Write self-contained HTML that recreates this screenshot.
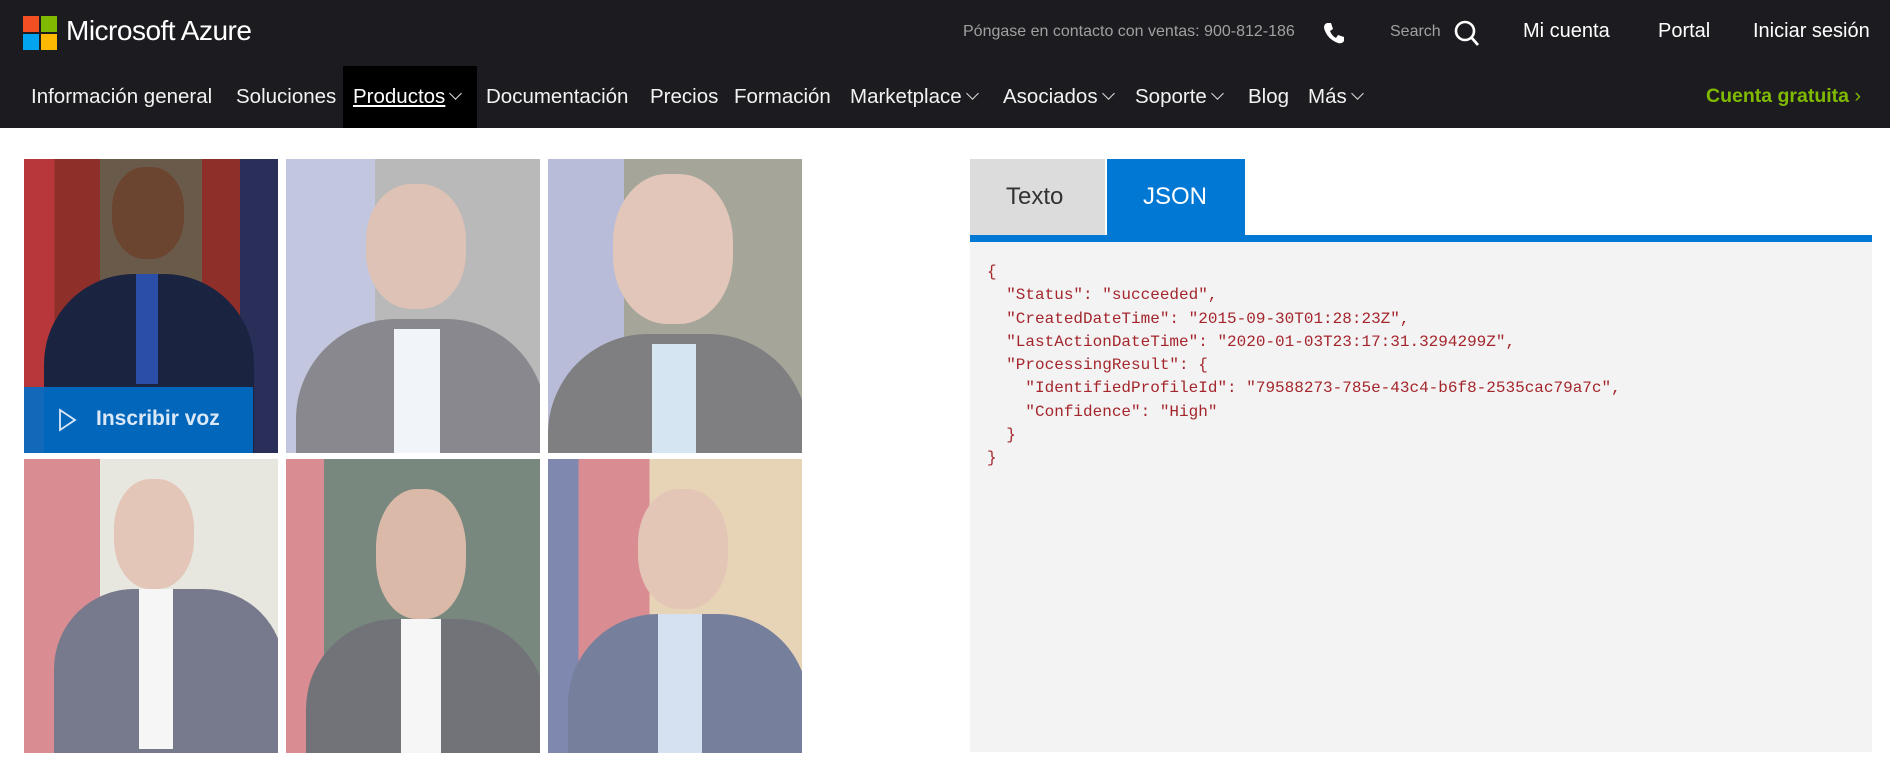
<!DOCTYPE html>
<html><head><meta charset="utf-8"><style>
*{margin:0;padding:0;box-sizing:border-box}
body{width:1890px;height:777px;background:#fff;font-family:"Liberation Sans",sans-serif;position:relative;overflow:hidden}
.hdr{position:absolute;left:0;top:0;width:1890px;height:128px;background:#1c1c20;color:#fff}
.a{position:absolute;white-space:nowrap}
.nav{top:85px;font-size:20.5px;color:#f2f2f2}
.chev{display:inline-block;width:9px;height:9px;border-right:1.5px solid #ddd;border-bottom:1.5px solid #ddd;transform:rotate(45deg);margin-left:6px;position:relative;top:-5px}
.ph{position:absolute;width:254px;height:294px;overflow:hidden}
.fade{position:absolute;inset:0;background:rgba(255,255,255,.4)}
pre.a{font-family:"Liberation Mono",monospace;font-size:16px;line-height:23.3px;color:#a4262c;white-space:pre}
</style></head><body>
<div class="hdr">
 <div class="a" style="left:23px;top:16px;width:16px;height:16px;background:#f25022"></div>
 <div class="a" style="left:41px;top:16px;width:16px;height:16px;background:#7fba00"></div>
 <div class="a" style="left:23px;top:34px;width:16px;height:16px;background:#00a4ef"></div>
 <div class="a" style="left:41px;top:34px;width:16px;height:16px;background:#ffb900"></div>
 <div class="a" style="left:66px;top:15px;font-size:28px;letter-spacing:-0.5px">Microsoft Azure</div>
 <div class="a" style="left:963px;top:23px;font-size:16px;color:#a0a0a0">Póngase en contacto con ventas: 900-812-186</div>
 <svg class="a" style="left:1322px;top:21px" width="24" height="24" viewBox="0 0 24 24"><path d="M5 2 L9 2 L11 8 L8 10 Q10 15 14 17 L16 14 L22 16 L22 20 Q20 23 16 22 Q5 18 2 7 Q2 3 5 2Z" fill="#fff"/></svg>
 <div class="a" style="left:1390px;top:23px;font-size:16px;color:#a0a0a0">Search</div>
 <svg class="a" style="left:1453px;top:19px" width="28" height="28" viewBox="0 0 28 28"><circle cx="12" cy="12" r="9" stroke="#fff" stroke-width="2.6" fill="none"/><path d="M18 18 L25 26" stroke="#fff" stroke-width="2.8"/></svg>
 <div class="a" style="left:1523px;top:20px;font-size:20px">Mi cuenta</div>
 <div class="a" style="left:1658px;top:20px;font-size:20px">Portal</div>
 <div class="a" style="left:1753px;top:20px;font-size:20px">Iniciar sesión</div>
 <div class="a" style="left:343px;top:66px;width:134px;height:62px;background:#000"></div>
 <div class="a nav" style="left:31px">Información general</div>
 <div class="a nav" style="left:236px">Soluciones</div>
 <div class="a nav" style="left:353px;color:#fff"><span style="text-decoration:underline">Productos</span><span class="chev"></span></div>
 <div class="a nav" style="left:486px">Documentación</div>
 <div class="a nav" style="left:650px">Precios</div>
 <div class="a nav" style="left:734px">Formación</div>
 <div class="a nav" style="left:850px">Marketplace<span class="chev"></span></div>
 <div class="a nav" style="left:1003px">Asociados<span class="chev"></span></div>
 <div class="a nav" style="left:1135px">Soporte<span class="chev"></span></div>
 <div class="a nav" style="left:1248px">Blog</div>
 <div class="a nav" style="left:1308px">Más<span class="chev"></span></div>
 <div class="a nav" style="left:1706px;color:#7fba00;font-weight:bold;font-size:19.5px">Cuenta gratuita <span style="font-weight:normal">›</span></div>
</div>

<!-- photos -->
<div class="ph" style="left:24px;top:159px;background:linear-gradient(90deg,#b8373a 0 12%,#8e2f2a 12% 30%,#6a5a4a 30% 70%,#8e2f2a 70% 85%,#2a2f5a 85%)">
 <div class="a" style="left:88px;top:8px;width:72px;height:92px;border-radius:45%;background:#6b4530"></div>
 <div class="a" style="left:20px;top:115px;width:210px;height:190px;border-radius:90px 90px 0 0;background:#1a2340"></div>
 <div class="a" style="left:112px;top:115px;width:22px;height:110px;background:#2b4fa8"></div>
</div>
<div class="ph" style="left:286px;top:159px;background:linear-gradient(90deg,#9aa0c8 0 35%,#8a8a8a 35%)">
 <div class="a" style="left:80px;top:25px;width:100px;height:125px;border-radius:45%;background:#c99a84"></div>
 <div class="a" style="left:10px;top:160px;width:250px;height:160px;border-radius:100px 100px 0 0;background:#3a3a44"></div>
 <div class="a" style="left:108px;top:170px;width:46px;height:130px;background:#e8eef6"></div><div class="fade"></div>
</div>
<div class="ph" style="left:548px;top:159px;background:linear-gradient(90deg,#8a90c0 0 30%,#6a6a55 30%)">
 <div class="a" style="left:65px;top:15px;width:120px;height:150px;border-radius:45%;background:#cfa08a"></div>
 <div class="a" style="left:0;top:175px;width:260px;height:140px;border-radius:100px 100px 0 0;background:#2a2a2e"></div>
 <div class="a" style="left:104px;top:185px;width:44px;height:120px;background:#b9d4e8"></div><div class="fade"></div>
</div>
<div class="ph" style="left:24px;top:459px;background:linear-gradient(90deg,#c0424a 0 30%,#d8d8cc 30%)">
 <div class="a" style="left:90px;top:20px;width:80px;height:110px;border-radius:45%;background:#d0a088"></div>
 <div class="a" style="left:30px;top:130px;width:230px;height:180px;border-radius:80px 80px 0 0;background:#1d2240"></div>
 <div class="a" style="left:115px;top:130px;width:34px;height:160px;background:#f0f0f0"></div><div class="fade"></div>
</div>
<div class="ph" style="left:286px;top:459px;background:linear-gradient(90deg,#c0424a 0 15%,#1e3a2a 15%)">
 <div class="a" style="left:90px;top:30px;width:90px;height:130px;border-radius:45%;background:#c48a6e"></div>
 <div class="a" style="left:20px;top:160px;width:240px;height:150px;border-radius:90px 90px 0 0;background:#14161e"></div>
 <div class="a" style="left:115px;top:160px;width:40px;height:140px;background:#f0f0f0"></div><div class="fade"></div>
</div>
<div class="ph" style="left:548px;top:459px;background:linear-gradient(90deg,#2a3a7a 0 12%,#c0424a 12% 40%,#d8b888 40%)">
 <div class="a" style="left:90px;top:30px;width:90px;height:120px;border-radius:45%;background:#d2a088"></div>
 <div class="a" style="left:20px;top:155px;width:240px;height:150px;border-radius:90px 90px 0 0;background:#1c2a5a"></div>
 <div class="a" style="left:110px;top:155px;width:44px;height:145px;background:#b9cde8"></div><div class="fade"></div>
</div>
<div class="a" style="left:24px;top:387px;width:229px;height:66px;background:rgba(0,110,200,.9)"></div>
<svg class="a" style="left:58px;top:408px" width="20" height="24" viewBox="0 0 20 24"><path d="M2 2 L17 12 L2 22Z" fill="none" stroke="#dbe8f8" stroke-width="1.8"/></svg>
<div class="a" style="left:96px;top:407px;font-size:21px;font-weight:bold;color:#dbe8f8">Inscribir voz</div>

<!-- right -->
<div class="a" style="left:970px;top:159px;width:135px;height:76px;background:#dcdcdc"></div>
<div class="a" style="left:1006px;top:183px;font-size:24px;color:#333">Texto</div>
<div class="a" style="left:1107px;top:159px;width:138px;height:76px;background:#0078d4"></div>
<div class="a" style="left:1143px;top:183px;font-size:24px;color:#fff">JSON</div>
<div class="a" style="left:970px;top:235px;width:902px;height:7px;background:#0078d4"></div>
<div class="a" style="left:970px;top:242px;width:902px;height:510px;background:#f3f3f3"></div>
<pre class="a" style="left:987px;top:261px">{
  "Status": "succeeded",
  "CreatedDateTime": "2015-09-30T01:28:23Z",
  "LastActionDateTime": "2020-01-03T23:17:31.3294299Z",
  "ProcessingResult": {
    "IdentifiedProfileId": "79588273-785e-43c4-b6f8-2535cac79a7c",
    "Confidence": "High"
  }
}</pre>
</body></html>
